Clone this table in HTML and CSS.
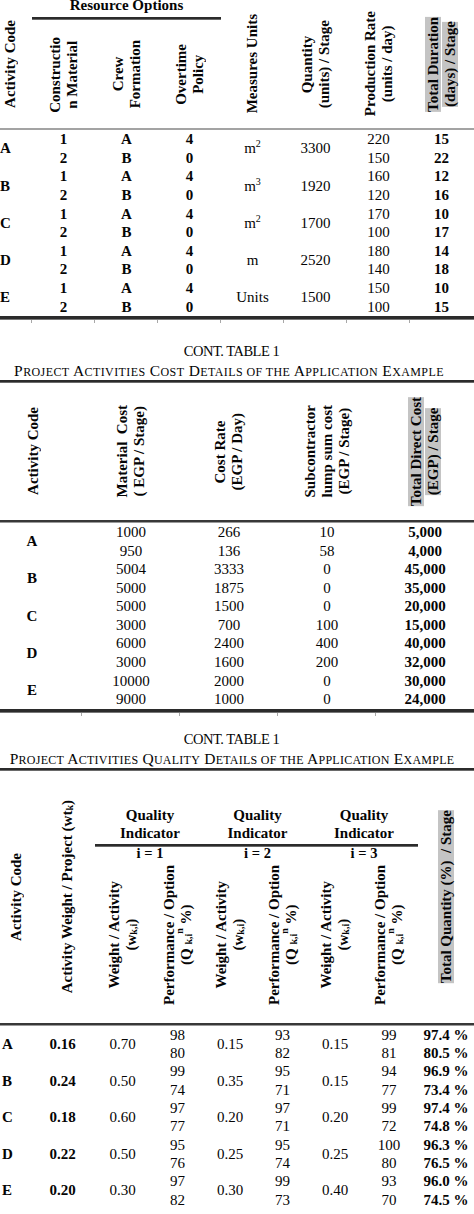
FILE: index.html
```html
<!DOCTYPE html>
<html>
<head>
<meta charset="utf-8">
<title>Table 1</title>
<link rel="stylesheet" href="styles.css">
</head>
<body>
<section class="sec1">
  <div class="h1">
    <div class="h1-code"><span class="rot">Activity Code</span></div>
    <div class="h1-group"><div class="grp-title">Resource Options</div><div class="rule-dbl"></div></div>
    <div class="hc"><span class="rot">Constructio<br>n Material</span></div>
    <div class="hc"><span class="rot">Crew<br>Formation</span></div>
    <div class="hc"><span class="rot">Overtime<br>Policy</span></div>
    <div class="hc full"><span class="rot">Measures Units</span></div>
    <div class="hc full"><span class="rot">Quantity<br>(units) / Stage</span></div>
    <div class="hc full"><span class="rot">Production Rate<br>(units / day)</span></div>
    <div class="hc full"><span class="rot"><span class="hl">Total Duration</span><br><span class="hl">(days) / Stage</span></span></div>
  </div>
  <div class="b1">
    <div class="k">A</div><div class="b">1</div><div class="b">A</div><div class="b">4</div><div class="s2">m<sup>2</sup></div><div class="s2">3300</div><div>220</div><div class="b">15</div>
    <div class="b">2</div><div class="b">B</div><div class="b">0</div><div>150</div><div class="b">22</div>
    <div class="k">B</div><div class="b">1</div><div class="b">A</div><div class="b">4</div><div class="s2">m<sup>3</sup></div><div class="s2">1920</div><div>160</div><div class="b">12</div>
    <div class="b">2</div><div class="b">B</div><div class="b">0</div><div>120</div><div class="b">16</div>
    <div class="k">C</div><div class="b">1</div><div class="b">A</div><div class="b">4</div><div class="s2">m<sup>2</sup></div><div class="s2">1700</div><div>170</div><div class="b">10</div>
    <div class="b">2</div><div class="b">B</div><div class="b">0</div><div>100</div><div class="b">17</div>
    <div class="k">D</div><div class="b">1</div><div class="b">A</div><div class="b">4</div><div class="s2">m</div><div class="s2">2520</div><div>180</div><div class="b">14</div>
    <div class="b">2</div><div class="b">B</div><div class="b">0</div><div>140</div><div class="b">18</div>
    <div class="k">E</div><div class="b">1</div><div class="b">A</div><div class="b">4</div><div class="s2">Units</div><div class="s2">1500</div><div>150</div><div class="b">10</div>
    <div class="b">2</div><div class="b">B</div><div class="b">0</div><div>100</div><div class="b">15</div>
  </div>
  <div class="rule-end"></div>
  <div class="ticks t1"><span></span><span></span><span></span><span></span><span></span><span></span><span></span><span></span></div>
</section>

<section class="sec2">
  <div class="title">CONT. TABLE 1</div>
  <div class="caption cap2">P<span class="s">ROJECT</span> A<span class="s">CTIVITIES</span> C<span class="s">OST</span> D<span class="s">ETAILS OF THE</span> A<span class="s">PPLICATION</span> E<span class="s">XAMPLE</span></div>
  <div class="rule-dbl"></div>
  <div class="h2">
    <div class="h2-k"><span class="rot">Activity Code</span></div>
    <div><span class="rot">Material&nbsp; Cost<br>( EGP / Stage)</span></div>
    <div><span class="rot">Cost Rate<br>(EGP / Day)</span></div>
    <div><span class="rot">Subcontractor<br>lump sum cost<br>(EGP / Stage)</span></div>
    <div><span class="rot"><span class="hl">Total Direct Cost</span><br><span class="hl">(EGP) / Stage</span></span></div>
  </div>
  <div class="rule-mid"></div>
  <div class="b2">
    <div class="k">A</div><div>1000</div><div>266</div><div>10</div><div class="b">5,000</div>
    <div>950</div><div>136</div><div>58</div><div class="b">4,000</div>
    <div class="k">B</div><div>5004</div><div>3333</div><div>0</div><div class="b">45,000</div>
    <div>5000</div><div>1875</div><div>0</div><div class="b">35,000</div>
    <div class="k">C</div><div>5000</div><div>1500</div><div>0</div><div class="b">20,000</div>
    <div>3000</div><div>700</div><div>100</div><div class="b">15,000</div>
    <div class="k">D</div><div>6000</div><div>2400</div><div>400</div><div class="b">40,000</div>
    <div>3000</div><div>1600</div><div>200</div><div class="b">32,000</div>
    <div class="k">E</div><div>10000</div><div>2000</div><div>0</div><div class="b">30,000</div>
    <div>9000</div><div>1000</div><div>0</div><div class="b">24,000</div>
  </div>
  <div class="rule-end"></div>
  <div class="ticks t2"><span></span><span></span><span></span><span></span><span></span></div>
</section>

<section class="sec3">
  <div class="title">CONT. TABLE 1</div>
  <div class="caption cap3">P<span class="s">ROJECT</span> A<span class="s">CTIVITIES</span> Q<span class="s">UALITY</span> D<span class="s">ETAILS OF THE</span> A<span class="s">PPLICATION</span> E<span class="s">XAMPLE</span></div>
  <div class="rule-dbl"></div>
  <div class="h3">
    <div class="h3-k"><span class="rot">Activity Code</span></div>
    <div class="h3-w"><span class="rot">Activity Weight / Project (wt<sub>k</sub>)</span></div>
    <div class="qi g1">Quality<br>Indicator</div>
    <div class="qi g2">Quality<br>Indicator</div>
    <div class="qi g3">Quality<br>Indicator</div>
    <div class="h3-rule rule-dbl"></div>
    <div class="ii g1">i = 1</div>
    <div class="ii g2">i = 2</div>
    <div class="ii g3">i = 3</div>
    <div class="sub c3"><span class="rot">Weight / Activity<br>(w<sub>k,i</sub>)</span></div>
    <div class="sub c4"><span class="rot">Performance / Option<br>(Q <sub>k,i</sub><sup>n</sup> %)</span></div>
    <div class="sub c5"><span class="rot">Weight / Activity<br>(w<sub>k,i</sub>)</span></div>
    <div class="sub c6"><span class="rot">Performance / Option<br>(Q <sub>k,i</sub><sup>n</sup> %)</span></div>
    <div class="sub c7"><span class="rot">Weight / Activity<br>(w<sub>k,i</sub>)</span></div>
    <div class="sub c8"><span class="rot">Performance / Option<br>(Q <sub>k,i</sub><sup>n</sup> %)</span></div>
    <div class="h3-t"><span class="rot"><span class="hl">Total Quantity (%) &nbsp;/ Stage</span></span></div>
  </div>
  <div class="rule-mid"></div>
  <div class="b3">
    <div class="k">A</div><div class="s2 b">0.16</div><div class="s2">0.70</div><div>98</div><div class="s2">0.15</div><div>93</div><div class="s2">0.15</div><div>99</div><div class="b">97.4 %</div>
    <div>80</div><div>82</div><div>81</div><div class="b">80.5 %</div>
    <div class="k">B</div><div class="s2 b">0.24</div><div class="s2">0.50</div><div>99</div><div class="s2">0.35</div><div>95</div><div class="s2">0.15</div><div>94</div><div class="b">96.9 %</div>
    <div>74</div><div>71</div><div>77</div><div class="b">73.4 %</div>
    <div class="k">C</div><div class="s2 b">0.18</div><div class="s2">0.60</div><div>97</div><div class="s2">0.20</div><div>97</div><div class="s2">0.20</div><div>99</div><div class="b">97.4 %</div>
    <div>77</div><div>71</div><div>72</div><div class="b">74.8 %</div>
    <div class="k">D</div><div class="s2 b">0.22</div><div class="s2">0.50</div><div>95</div><div class="s2">0.25</div><div>95</div><div class="s2">0.25</div><div>100</div><div class="b">96.3 %</div>
    <div>76</div><div>74</div><div>80</div><div class="b">76.5 %</div>
    <div class="k">E</div><div class="s2 b">0.20</div><div class="s2">0.30</div><div>97</div><div class="s2">0.30</div><div>99</div><div class="s2">0.40</div><div>93</div><div class="b">96.0 %</div>
    <div>82</div><div>73</div><div>70</div><div class="b">74.5 %</div>
  </div>
</section>
</body>
</html>
```

FILE: styles.css
```css
* { box-sizing: border-box; }
html, body { margin: 0; padding: 0; background: #fff; }
body {
  width: 474px;
  height: 1214px;
  overflow: hidden;
  font-family: "Liberation Serif", "Times New Roman", serif;
  font-size: 15px;
  color: #050505;
}

/* rotated (bottom-to-top) header text */
.rot {
  writing-mode: vertical-rl;
  transform: rotate(180deg);
  text-align: center;
  font-weight: bold;
  line-height: 17px;
  white-space: nowrap;
}
.hl { background: #c4c4c4; }
sub, sup { font-size: 10px; line-height: 0; }
sub { vertical-align: -3px; }
sup { vertical-align: 6px; }
.b { font-weight: bold; }

/* rules */
.rule-dbl { height: 1px; border-top: 2px solid #2b2b2b; border-bottom: 1px solid #6a6a6a; }
.rule-end { height: 1px; border-top: 3px solid #2b2b2b; border-bottom: 1px solid #777; }
.rule-mid { height: 0; border-top: 2px solid #383838; border-bottom: 1px solid #9a9a9a; }

.ticks { display: grid; height: 3px; }
.ticks span { border-right: 1px solid #a8a8a8; }
.ticks span:last-child { border-right: 0; }
.t1 { grid-template-columns: 32px repeat(7, 63px); }
.t2 { grid-template-columns: 82px repeat(4, 98px); }

/* ---------- section 1 ---------- */
.h1 {
  display: grid;
  grid-template-columns: 32px repeat(7, 63px);
  grid-template-rows: 21px 107px;
  border-bottom: 2px solid #a3a3a3;
}
.h1-code { grid-column: 1; grid-row: 1 / 3; display: flex; align-items: center; padding-left: 2px; }
.h1-group { grid-column: 2 / 5; grid-row: 1; }
.grp-title { font-weight: bold; text-align: center; line-height: 15px; margin-top: -2px; }
.h1-group .rule-dbl { margin-top: 4px; }
.hc { grid-row: 2; display: flex; align-items: center; justify-content: center; }
.hc.full { grid-row: 1 / 3; }

.b1 {
  display: grid;
  grid-template-columns: 32px repeat(7, 63px);
  grid-auto-rows: 18.65px;
  line-height: 18.65px;
  text-align: center;
}
.b1 .k { grid-row: span 2; align-self: center; text-align: left; font-weight: bold; }
.b1 .s2 { grid-row: span 2; align-self: center; }

/* ---------- titles ---------- */
.title {
  text-align: center;
  font-size: 14.5px;
  line-height: 16px;
  letter-spacing: -0.5px;
  padding-right: 11px;
}
.caption {
  text-align: center;
  font-size: 15.5px;
  line-height: 16px;
  margin-top: 4px;
  white-space: nowrap;
}
.caption .s { font-size: 12px; }
.cap2 { letter-spacing: 0.4px; padding-right: 16px; }
.cap3 { letter-spacing: 0.25px; padding-right: 10px; }
.sec2 .title { margin-top: 19.5px; }
.sec3 .title { margin-top: 15px; }

/* ---------- section 2 ---------- */
.h2 {
  display: grid;
  grid-template-columns: 82px repeat(4, 98px);
  height: 137px;
}
.h2 > div { display: flex; align-items: center; justify-content: center; }
.h2 > .h2-k { padding-right: 16px; }

.b2 {
  display: grid;
  grid-template-columns: 82px repeat(4, 98px);
  grid-auto-rows: 18.6px;
  line-height: 18.6px;
  text-align: center;
}
.b2 .k { grid-row: span 2; align-self: center; font-weight: bold; padding-right: 18px; }

/* ---------- section 3 ---------- */
.h3 {
  display: grid;
  grid-template-columns: 30px 65px 55px 55px 50px 55px 50px 58px 56px;
  grid-template-rows: 35px 36px 5.5px 12px 163.5px;
}
.h3-k { grid-column: 1; grid-row: 1 / -1; display: flex; align-items: center; justify-content: center; padding-left: 2px; }
.h3-w { grid-column: 2; grid-row: 1 / -1; display: flex; align-items: center; justify-content: center; padding-left: 10px; }
.h3-t { grid-column: 9; grid-row: 1 / -1; display: flex; align-items: center; justify-content: center; }
.qi { grid-row: 2; text-align: center; font-weight: bold; line-height: 18px; }
.ii { grid-row: 4; text-align: center; font-weight: bold; line-height: 12px; font-size: 14.5px; }
.g1 { grid-column: 3 / 5; }
.g2 { grid-column: 5 / 7; }
.g3 { grid-column: 7 / 9; }
.h3-rule { grid-column: 3 / 9; grid-row: 3; align-self: start; margin-top: 2px; }
.sub { grid-row: 5; display: flex; align-items: center; justify-content: center; padding-bottom: 13px; }
.c3 { grid-column: 3; }
.c4 { grid-column: 4; }
.c5 { grid-column: 5; }
.c6 { grid-column: 6; }
.c7 { grid-column: 7; }
.c8 { grid-column: 8; }

.b3 {
  display: grid;
  grid-template-columns: 30px 65px 55px 55px 50px 55px 50px 58px 56px;
  grid-auto-rows: 18.3px;
  line-height: 18.3px;
  text-align: center;
}
.b3 .k { grid-row: span 2; align-self: center; text-align: left; padding-left: 2px; font-weight: bold; }
.b3 .s2 { grid-row: span 2; align-self: center; }
```
